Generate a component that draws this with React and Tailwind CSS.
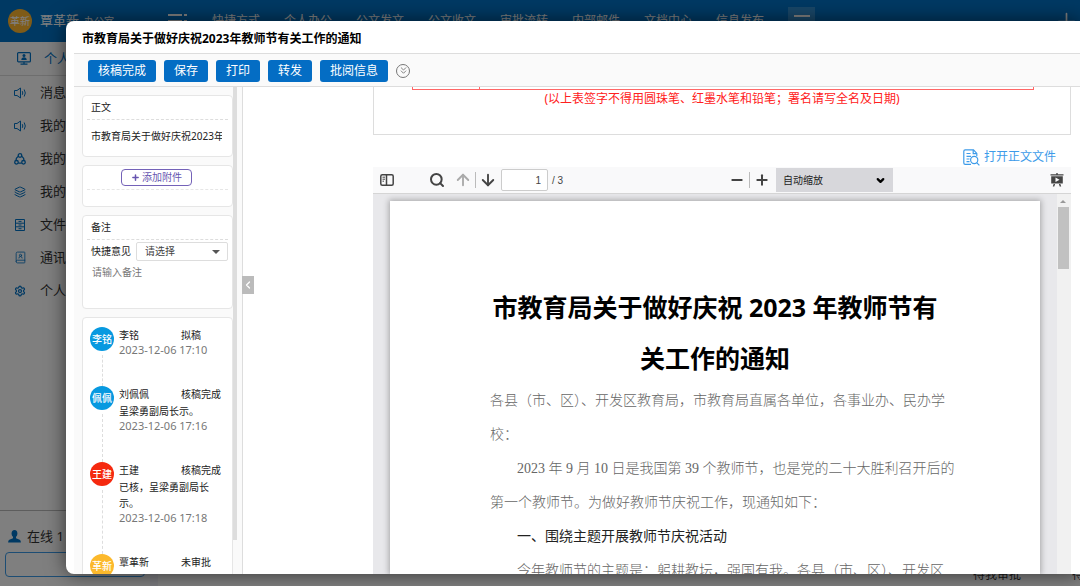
import React, { useState } from 'react';
import {
  ArrowDown,
  ArrowUp,
  BookUser,
  ChevronDown,
  ChevronLeft,
  ChevronsDown,
  Layers,
  Minus,
  Plus,
  Search,
  Settings,
} from 'lucide-react';

const topMenu = ['快捷方式', '个人办公', '公文发文', '公文收文', '审批流转', '内部邮件', '文档中心', '信息发布'];

const actions = ['核稿完成', '保存', '打印', '转发', '批阅信息'];

const records = [
  { id: 1, avatar: '李铭', name: '李铭', step: '拟稿', time: '2023-12-06 17:10', color: 'bg-[#0799e0]' },
  { id: 2, avatar: '佩佩', name: '刘佩佩', step: '核稿完成', note: '呈梁勇副局长示。', time: '2023-12-06 17:16', color: 'bg-[#0799e0]' },
  { id: 3, avatar: '王建', name: '王建', step: '核稿完成', note: '已核，呈梁勇副局长示。', time: '2023-12-06 17:18', color: 'bg-[#f5290f]' },
  { id: 4, avatar: '革新', name: '覃革新', step: '未审批', color: 'bg-[#fcb92c]' },
];

const ShareIcon = () => (
  <svg width="12" height="12" viewBox="0 0 12 12" fill="none" stroke="currentColor" strokeWidth="1.3">
    <circle cx="6" cy="2.5" r="1.8" />
    <circle cx="2.5" cy="9.3" r="1.8" />
    <circle cx="9.5" cy="9.3" r="1.8" />
    <path d="M4.3 3.2C2.8 4.2 2 5.6 2 7.4M7.7 3.2c1.5 1 2.3 2.4 2.3 4.2M4.3 10.2h3.4" />
  </svg>
);

const SpeakerIcon = () => (
  <svg width="12" height="12" viewBox="0 0 12 12" fill="none" stroke="currentColor" strokeWidth="1">
    <path d="M.5 3.500h2.500L6.500 1v10L3 8.500H.5z" />
    <path d="M8.300 4.200q1 1.800 0 3.600M10.200 2.500q2.200 3.500 0 7" />
  </svg>
);

const CabinetIcon = () => (
  <svg width="10" height="12" viewBox="0 0 10 12" fill="none" stroke="currentColor" strokeWidth="1">
    <path d="M.5.5h9v11h-9zM.5 4.200h9M.5 7.800h9M3.500 2.400h3M3.500 6h3M3.500 9.700h3" />
  </svg>
);

const MonitorIcon = () => (
  <svg width="14" height="13" viewBox="0 0 14 13" fill="none" stroke="currentColor" strokeWidth="1.2">
    <rect x="0.6" y="0.6" width="12.8" height="9.3" rx="1" />
    <path d="M3.5 12.2h7M7 10v2" />
    <circle cx="7" cy="3.6" r="1.5" fill="currentColor" stroke="none" />
    <path d="M4.3 8c0-2 1.1-2.8 2.7-2.8S9.7 6 9.7 8z" fill="currentColor" stroke="none" />
  </svg>
);

const DocSearchIcon = () => (
  <svg width="17" height="17" viewBox="0 0 17 17" fill="none" stroke="currentColor" strokeWidth="1.2">
    <path d="M8 15.4H2.2A1.4 1.4 0 0 1 .8 14V2.2A1.4 1.4 0 0 1 2.2.8h8.300l3.300 3.600v2.800" />
    <path d="M10.200 1v3.600h3.400M3.500 4.500h4M3.500 7.300h4.500M3.500 10h3M3.500 12.700h3" />
    <circle cx="11.200" cy="11" r="3.600" />
    <path d="M13.700 13.700l2.700 2.700" />
  </svg>
);

const SidebarToggleIcon = () => (
  <svg width="14" height="12" viewBox="0 0 14 12" fill="none" stroke="currentColor" strokeWidth="1.5">
    <rect x="0.8" y="0.8" width="12.4" height="10.4" rx="1.5" />
    <path d="M6.500 1v10" />
    <path d="M2.500 3.200h2.500M2.500 5.200h2.500M2.500 7.200h1.500" strokeWidth="1" />
  </svg>
);

const PresentIcon = () => (
  <svg width="14" height="14" viewBox="0 0 14 14" fill="currentColor">
    <path d="M6.300 0h1.400v1.200H13.500v1.400H.5V1.200h5.800z" />
    <path fillRule="evenodd" d="M1.200 3.200h11.600v7.300H1.200zM5.500 4.600v4.500l4-2.250z" />
    <path d="M3.600 11h1.500l-.8 2.600H2.800zM8.900 11h1.500l.8 2.600H9.700z" />
  </svg>
);

const PersonIcon = () => (
  <svg width="13" height="13" viewBox="0 0 13 13" fill="currentColor">
    <ellipse cx="6.5" cy="3.6" rx="2.9" ry="3.5" />
    <path d="M5 6h3v2.300l3.700 1.500q1.200.6 1.200 2.700H.1q0-2.100 1.200-2.700L5 8.300z" />
  </svg>
);

const sideMenu = [
  { label: '消息提醒', icon: <SpeakerIcon /> },
  { label: '我的消息', icon: <SpeakerIcon /> },
  { label: '我的流程', icon: <ShareIcon /> },
  { label: '我的待办', icon: <Layers size={12} /> },
  { label: '文件管理', icon: <CabinetIcon /> },
  { label: '通讯录', icon: <BookUser size={13} strokeWidth={1.5} /> },
  { label: '个人设置', icon: <Settings size={12} strokeWidth={2.5} /> },
];

const Backdrop = () => (
  <div className="flex h-full flex-col bg-[#f2f2fa]">
    <header className="flex h-[42px] shrink-0 items-center bg-[#0072c6] text-white">
      <span className="ml-2 flex size-6 shrink-0 items-center justify-center rounded-full bg-[#ffb62e] text-[10px]">革新</span>
      <span className="ml-2 w-11 shrink-0 text-[13px]">覃革新</span>
      <span className="w-[84px] shrink-0 text-[10px]">办公室</span>
      <svg width="20" height="14" viewBox="0 0 20 14" className="shrink-0" fill="none" stroke="currentColor" strokeWidth="2">
        <path d="M0 1h14M16 1h3M0 7h14M16 7h3M0 13h14M16 13h3" />
      </svg>
      <nav className="ml-6 flex gap-6 text-xs">
        {topMenu.map((item) => (
          <a key={item} href="#" className="w-12 shrink-0 whitespace-nowrap">{item}</a>
        ))}
      </nav>
      <span className="ml-6 flex h-7 w-[27px] items-start justify-center bg-white/20 pt-2">
        <span className="h-0.5 w-4 bg-white" />
      </span>
      <Plus size={27} strokeWidth={1.5} className="ml-auto" />
    </header>
    <div className="flex min-h-0 grow">
      <aside className="flex w-[150px] shrink-0 flex-col bg-white text-[13px] text-[#333]">
        <div className="flex h-[34px] items-center gap-[13px] border-b border-[#ddd] pl-[17px] text-[#0072c6]">
          <MonitorIcon />
          <span>个人办公</span>
        </div>
        <ul className="flex grow flex-col">
          {sideMenu.map((item) => (
            <li key={item.label} className="flex h-[33px] items-center">
              <span className="flex w-10 justify-center text-[#0072c6]">{item.icon}</span>
              <span>{item.label}</span>
            </li>
          ))}
        </ul>
        <div className="flex h-[76px] shrink-0 flex-col border-t border-[#bbb] px-[5px] pt-4">
          <div className="flex h-[25px] items-center gap-1.5 pb-1.5 pl-[3px]">
            <span className="text-[#0072c6]"><PersonIcon /></span>
            <span>在线 1 人</span>
          </div>
          <div className="h-[25px] rounded border border-[#3a9be8]" />
        </div>
      </aside>
      <main className="ml-2 flex grow items-end justify-end gap-[51px] bg-white pb-[3px] text-xs text-[#333]">
        <span>待我审批</span>
        <span className="w-2 whitespace-nowrap">待我审批</span>
      </main>
    </div>
  </div>
);

const Card = ({ className = '', children }) => (
  <section className={`shrink-0 rounded border border-[#e6e6e6] bg-white ${className}`}>{children}</section>
);

const RecordItem = ({ record, last }) => (
  <li className="flex gap-[5px]">
    <div className="flex w-6 shrink-0 flex-col items-center">
      <span className={`flex size-6 shrink-0 items-center justify-center rounded-full text-[10px] font-medium whitespace-nowrap text-white ${record.color}`}>
        {record.avatar}
      </span>
      {!last && <span className="mt-1 grow border-l border-dashed border-[#ddd]" />}
    </div>
    <div className="min-w-0 grow pb-[29px] text-[10px] leading-4 text-[#222]">
      <div className="flex">
        <span className="w-[62px]">{record.name}</span>
        <span>{record.step}</span>
      </div>
      {record.note && <p className="mt-px pr-2.5">{record.note}</p>}
      <time className="block text-[11px] leading-[14px] text-[#777]">{record.time}</time>
    </div>
  </li>
);

const SidePanel = () => (
  <div className="relative flex w-[169px] shrink-0 border-r border-[#ddd] bg-[#fafafa] text-[10px] text-[#222]">
    <div className="flex min-w-0 grow flex-col gap-2 overflow-hidden pt-2 pl-2">
      <Card className="h-[62px] px-1">
        <h2 className="border-b border-dashed border-[#ddd] px-1 py-1 leading-[15px]">正文</h2>
        <p className="mr-1.5 ml-1 overflow-hidden pt-2 leading-4 whitespace-nowrap">市教育局关于做好庆祝2023年教师节有关工作的通知</p>
      </Card>
      <Card className="h-[42px] px-1">
        <div className="flex justify-center border-b border-dashed border-[#e6e6e6] py-[3px] pr-0.5">
          <button type="button" className="flex h-[17px] w-[71px] items-center justify-center gap-0.5 rounded-sm border border-[#7462b8] text-[#6755b0]">
            <Plus size={9} strokeWidth={4} />
            添加附件
          </button>
        </div>
      </Card>
      <Card className="h-[94px] px-1">
        <h2 className="border-b border-dashed border-[#ddd] px-1 py-1 leading-[15px]">备注</h2>
        <div className="mt-0.5 flex items-center gap-1 pl-1">
          <label htmlFor="opinion" className="w-[41px] shrink-0 whitespace-nowrap">快捷意见</label>
          <div className="relative min-w-0 grow">
            <select id="opinion" className="h-[19px] w-full appearance-none rounded-xs border border-[#ddd] bg-white pl-2 text-[10px] text-[#444]">
              <option>请选择</option>
            </select>
            <span className="pointer-events-none absolute top-2 right-2 border-x-4 border-t-4 border-x-transparent border-t-[#555]" />
          </div>
        </div>
        <textarea aria-label="备注" placeholder="请输入备注" className="mt-[3px] block h-9 w-full resize-none px-[5px] text-[10px] leading-4 placeholder:text-[#777]" />
      </Card>
      <Card className="h-[280px] pt-[9px] pr-1 pl-[7px]">
        <ul>
          {records.map((record, i) => (
            <RecordItem key={record.id} record={record} last={i === records.length - 1} />
          ))}
        </ul>
      </Card>
    </div>
    <div className="mr-[5px] h-[453px] w-1 shrink-0 bg-[#ddd]" />
    <button type="button" aria-label="收起" className="absolute top-[189px] -right-3 flex h-[18px] w-3 items-center justify-center bg-[#bbb] text-white">
      <ChevronLeft size={12} strokeWidth={2.5} />
    </button>
  </div>
);

const PdfToolbar = () => {
  const [page, setPage] = useState('1');

  return (
    <div className="flex h-[27px] shrink-0 items-center border-b border-[#d5d5d5] bg-[#f9f9fa] px-[7px] font-['Liberation_Sans','Noto_Sans_CJK_SC',sans-serif] text-[10px] text-[#444]">
      <button type="button" aria-label="侧栏"><SidebarToggleIcon /></button>
      <button type="button" aria-label="查找" className="ml-[35px]"><Search size={16} strokeWidth={3} /></button>
      <button type="button" aria-label="上一页" className="ml-[9px] text-[#aaa]"><ArrowUp size={18} strokeWidth={2.5} /></button>
      <span className="mx-[3px] h-4 w-px bg-[#bbb]" />
      <button type="button" aria-label="下一页"><ArrowDown size={18} strokeWidth={2.5} /></button>
      <input
        aria-label="页码"
        value={page}
        onChange={(e) => setPage(e.target.value)}
        className="ml-1 h-[22px] w-[47px] rounded-xs border border-[#ccc] bg-white px-1.5 text-right"
      />
      <span className="ml-1">/ 3</span>
      <div className="ml-auto flex items-center pr-[157px]">
        <button type="button" aria-label="缩小"><Minus size={16} strokeWidth={3} /></button>
        <span className="mx-1 h-4 w-px bg-[#bbb]" />
        <button type="button" aria-label="放大"><Plus size={16} strokeWidth={3} /></button>
        <div className="relative ml-1.5">
          <select aria-label="缩放" className="h-6 w-[117px] appearance-none bg-[#d7d7db] pl-[7px] text-[10px] text-[#222]">
            <option>自动缩放</option>
          </select>
          <ChevronDown size={11} strokeWidth={5} className="pointer-events-none absolute top-[7px] right-[7px] text-black" />
        </div>
      </div>
      <button type="button" aria-label="演示"><PresentIcon /></button>
    </div>
  );
};

const PdfPage = () => (
  <article className="min-w-0 grow bg-white px-[100px] pt-[81px] font-['Liberation_Serif','Noto_Sans_CJK_SC',serif] shadow-[0_0_6px_1px_rgba(0,0,0,0.3)]">
    <h2 className="text-center font-['Noto_Sans','Noto_Sans_CJK_SC',sans-serif] text-[25px] leading-[51px] font-bold text-black">
      市教育局关于做好庆祝 2023 年教师节有
      <br />
      关工作的通知
    </h2>
    <div className="text-[14px] leading-[34px] font-light whitespace-nowrap text-[#666]">
      <p>各县（市、区）、开发区教育局，市教育局直属各单位，各事业办、民办学</p>
      <p>校：</p>
      <p className="indent-[27px]">2023 年 9 月 10 日是我国第 39 个教师节，也是党的二十大胜利召开后的</p>
      <p>第一个教师节。为做好教师节庆祝工作，现通知如下：</p>
      <h3 className="indent-[27px] font-normal text-[#222]">一、围绕主题开展教师节庆祝活动</h3>
      <p className="indent-[27px]">今年教师节的主题是：躬耕教坛，强国有我。各县（市、区）、开发区</p>
    </div>
  </article>
);

const DocumentView = () => (
  <div className="flex min-w-0 grow flex-col bg-white pr-[9px] pl-[130px]">
    <div className="h-12 shrink-0 border-x border-b border-[#ddd]">
      <div className="mr-9 ml-[38px] h-[3px] border-x border-b border-[#ff6666]">
        <div className="ml-[66px] h-0.5 w-px bg-[#ff6666]" />
      </div>
      <p className="text-center text-xs leading-[18px] text-[#ff2020]">(以上表签字不得用圆珠笔、红墨水笔和铅笔；署名请写全名及日期)</p>
    </div>
    <a href="#" className="mr-[15px] flex h-8 shrink-0 items-center justify-end gap-1 pt-3 text-xs text-[#3d9be9]">
      <DocSearchIcon />
      打开正文文件
    </a>
    <PdfToolbar />
    <div className="flex min-h-0 grow overflow-hidden bg-[#e8e8eb]">
      <div className="flex min-w-0 grow pt-[7px] pr-[17px] pl-[17px]">
        <PdfPage />
      </div>
      <div className="flex w-[14px] shrink-0 flex-col items-center bg-[#f1f1f1] pr-0.5">
        <span className="mt-1.5 mb-1 border-x-[3px] border-b-[3px] border-x-transparent border-b-[#999]" />
        <span className="h-[62px] w-[11px] bg-[#c1c1c1]" />
      </div>
    </div>
  </div>
);

const App = () => {
  return (
    <div className="relative h-screen w-full overflow-hidden font-['Noto_Sans','Noto_Sans_CJK_SC',sans-serif]">
      <Backdrop />
      <div className="absolute inset-0 bg-black/50" />
      <div
        role="dialog"
        aria-labelledby="dialog-title"
        className="absolute top-[21px] right-0 bottom-3 left-[66px] flex flex-col overflow-hidden rounded-l-lg bg-white pl-2 shadow-[0_0_20px_rgba(0,0,0,0.6)]"
      >
        <h1 id="dialog-title" className="flex h-8 shrink-0 items-center pt-[3px] pl-2 text-xs font-bold text-black">
          市教育局关于做好庆祝2023年教师节有关工作的通知
        </h1>
        <div className="flex h-[34px] shrink-0 items-center gap-2 border-y border-[#ddd] bg-[#fafafa] pt-px pl-3.5">
          {actions.map((action) => (
            <button key={action} type="button" className="h-[22px] rounded-[3px] bg-[#046dc4] px-2.5 text-xs text-white">
              {action}
            </button>
          ))}
          <button type="button" aria-label="更多" className="flex size-3.5 items-center justify-center rounded-full border border-[#777] text-[#777]">
            <ChevronsDown size={11} />
          </button>
        </div>
        <div className="flex min-h-0 grow">
          <SidePanel />
          <DocumentView />
        </div>
      </div>
    </div>
  );
};

export default App;
